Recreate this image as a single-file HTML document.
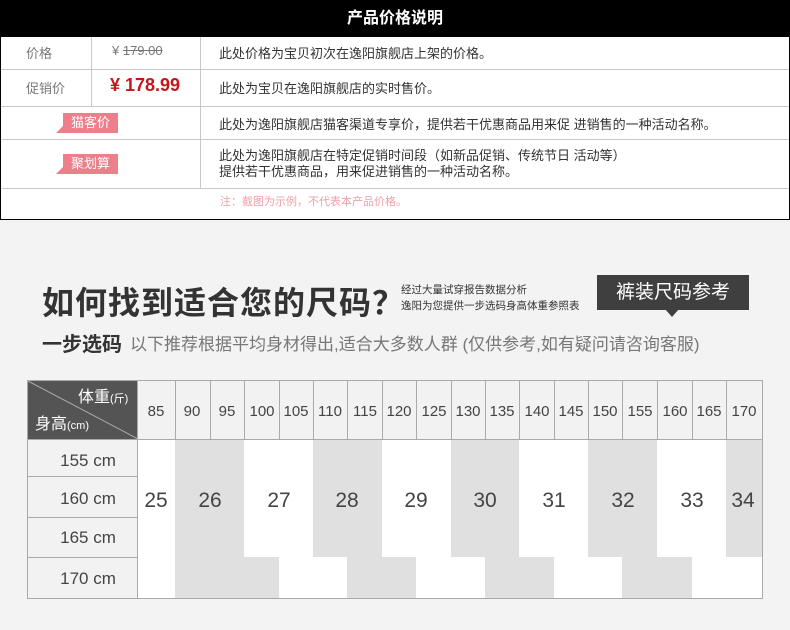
<!DOCTYPE html>
<html><head><meta charset="utf-8"><style>
*{margin:0;padding:0;box-sizing:border-box}
body{width:790px;height:630px;background:#f3f3f3;font-family:"Liberation Sans","Noto Sans CJK SC",sans-serif;position:relative;overflow:hidden}
.abs{position:absolute}
#top{position:absolute;left:0;top:0;width:790px;height:220px;background:#fff;border:1px solid #000}
#hdr{position:absolute;left:0;top:0;width:790px;height:37px;background:#000;color:#fff;font-weight:bold;font-size:16px;text-align:center;line-height:37px}
.hl{position:absolute;left:1px;width:788px;height:1px;background:#c8c8c8}
.vl{position:absolute;width:1px;background:#c8c8c8}
.t{position:absolute;font-size:13px;color:#333;white-space:nowrap}
.g{color:#777}
.tag{position:absolute;background:#ec7f8a;color:#fff;font-size:13px;width:55px;height:20px;line-height:20px;text-align:center}
.tag:before{content:"";position:absolute;left:-7px;bottom:0;border-right:7px solid #ec7f8a;border-top:7px solid transparent}
.tab{position:absolute;left:27px;top:380px;width:736px;height:219px;border:1px solid #a9a9a9;background:#fff}
</style></head><body>
<div id="top"></div>
<div id="hdr">产品价格说明</div>
<div class="hl" style="top:69px"></div>
<div class="hl" style="top:106px"></div>
<div class="hl" style="top:139px"></div>
<div class="hl" style="top:188px"></div>
<div class="vl" style="left:91px;top:37px;height:69px"></div>
<div class="vl" style="left:200px;top:37px;height:151px"></div>
<div class="t g" style="left:26px;top:43px">价格</div>
<div class="t g" style="left:112px;top:43px">¥ <s>179.00</s></div>
<div class="t" style="left:219px;top:43px">此处价格为宝贝初次在逸阳旗舰店上架的价格。</div>
<div class="t g" style="left:26px;top:78px">促销价</div>
<div class="t" style="left:110px;top:75px;color:#c4161c;font-weight:bold;font-size:18px">¥ 178.99</div>
<div class="t" style="left:219px;top:78px">此处为宝贝在逸阳旗舰店的实时售价。</div>
<div class="tag" style="left:63px;top:113px">猫客价</div>
<div class="t" style="left:219px;top:114px">此处为逸阳旗舰店猫客渠道专享价，提供若干优惠商品用来促 进销售的一种活动名称。</div>
<div class="tag" style="left:63px;top:154px">聚划算</div>
<div class="t" style="left:219px;top:148px;line-height:16px">此处为逸阳旗舰店在特定促销时间段（如新品促销、传统节日 活动等）<br>提供若干优惠商品，用来促进销售的一种活动名称。</div>
<div class="t" style="left:220px;top:193px;font-size:11px;color:#f0a0a8">注：截图为示例，不代表本产品价格。</div>

<div class="t" style="left:42px;top:278px;font-size:32px;font-weight:bold;color:#333;letter-spacing:1px">如何找到适合您的尺码？</div>
<div class="t" style="left:401px;top:282px;font-size:10.5px;color:#333">经过大量试穿报告数据分析</div>
<div class="t" style="left:401px;top:298px;font-size:10.5px;color:#333">逸阳为您提供一步选码身高体重参照表</div>
<div class="abs" style="left:597px;top:275px;width:152px;height:35px;background:#3f3f3f;color:#fff;font-size:19px;text-align:center;line-height:35px">裤装尺码参考</div>
<div class="abs" style="left:665px;top:309px;border-left:7px solid transparent;border-right:7px solid transparent;border-top:8px solid #3f3f3f"></div>
<div class="t" style="left:42px;top:328px;font-size:20px;font-weight:bold;color:#333">一步选码</div>
<div class="t" style="left:130px;top:330px;font-size:17px;color:#777">以下推荐根据平均身材得出,适合大多数人群 (仅供参考,如有疑问请咨询客服)</div>

<div class="tab"></div>
<svg class="abs" style="left:0;top:0" width="790" height="630">
<rect x="28" y="381" width="110" height="58" fill="#545454"/>
<line x1="28" y1="381" x2="138" y2="439" stroke="#aaa" stroke-width="1"/>
<rect x="138" y="381" width="624" height="58" fill="#f2f2f2"/>
<rect x="28" y="439" width="110" height="159" fill="#f2f2f2"/>
<g fill="#e0e0e0">
<rect x="175" y="439" width="69" height="118"/><rect x="313" y="439" width="69" height="118"/>
<rect x="451" y="439" width="68" height="118"/><rect x="588" y="439" width="69" height="118"/>
<rect x="726" y="439" width="36" height="118"/>
<rect x="175" y="557" width="104" height="41"/><rect x="347" y="557" width="69" height="41"/>
<rect x="485" y="557" width="69" height="41"/><rect x="622" y="557" width="70" height="41"/>
</g>
<g stroke="#aaa" stroke-width="1">
<line x1="28" y1="439.5" x2="762" y2="439.5"/>
<line x1="28" y1="476.5" x2="138" y2="476.5"/><line x1="28" y1="517.5" x2="138" y2="517.5"/><line x1="28" y1="557.5" x2="138" y2="557.5"/>
<line x1="137.5" y1="381" x2="137.5" y2="598"/>
<line x1="175.5" y1="381" x2="175.5" y2="439"/><line x1="210.5" y1="381" x2="210.5" y2="439"/><line x1="244.5" y1="381" x2="244.5" y2="439"/>
<line x1="279.5" y1="381" x2="279.5" y2="439"/><line x1="313.5" y1="381" x2="313.5" y2="439"/><line x1="347.5" y1="381" x2="347.5" y2="439"/>
<line x1="382.5" y1="381" x2="382.5" y2="439"/><line x1="416.5" y1="381" x2="416.5" y2="439"/><line x1="451.5" y1="381" x2="451.5" y2="439"/>
<line x1="485.5" y1="381" x2="485.5" y2="439"/><line x1="519.5" y1="381" x2="519.5" y2="439"/><line x1="554.5" y1="381" x2="554.5" y2="439"/>
<line x1="588.5" y1="381" x2="588.5" y2="439"/><line x1="622.5" y1="381" x2="622.5" y2="439"/><line x1="657.5" y1="381" x2="657.5" y2="439"/>
<line x1="692.5" y1="381" x2="692.5" y2="439"/><line x1="726.5" y1="381" x2="726.5" y2="439"/>
</g>
<g font-family="Liberation Sans Narrow,Liberation Sans,sans-serif" font-size="15" fill="#444" text-anchor="middle">
<text x="156" y="416">85</text><text x="192" y="416">90</text><text x="227" y="416">95</text><text x="262" y="416">100</text>
<text x="296" y="416">105</text><text x="330" y="416">110</text><text x="365" y="416">115</text><text x="399" y="416">120</text>
<text x="434" y="416">125</text><text x="468" y="416">130</text><text x="502" y="416">135</text><text x="537" y="416">140</text>
<text x="571" y="416">145</text><text x="605" y="416">150</text><text x="640" y="416">155</text><text x="675" y="416">160</text>
<text x="709" y="416">165</text><text x="744" y="416">170</text>
<text x="88" y="466" font-size="17">155 cm</text><text x="88" y="504" font-size="17">160 cm</text>
<text x="88" y="543" font-size="17">165 cm</text><text x="88" y="584" font-size="17">170 cm</text>
<g font-size="21"><text x="156" y="507">25</text><text x="210" y="507">26</text><text x="279" y="507">27</text><text x="347" y="507">28</text>
<text x="416" y="507">29</text><text x="485" y="507">30</text><text x="554" y="507">31</text><text x="623" y="507">32</text>
<text x="692" y="507">33</text><text x="743" y="507">34</text></g>
</g>
<g font-family="Liberation Sans,Noto Sans CJK SC,sans-serif" fill="#fff">
<text x="78" y="402" font-size="16">体重<tspan font-size="11">(斤)</tspan></text>
<text x="35" y="429" font-size="16">身高<tspan font-size="11">(cm)</tspan></text>
</g>
</svg>
</body></html>
